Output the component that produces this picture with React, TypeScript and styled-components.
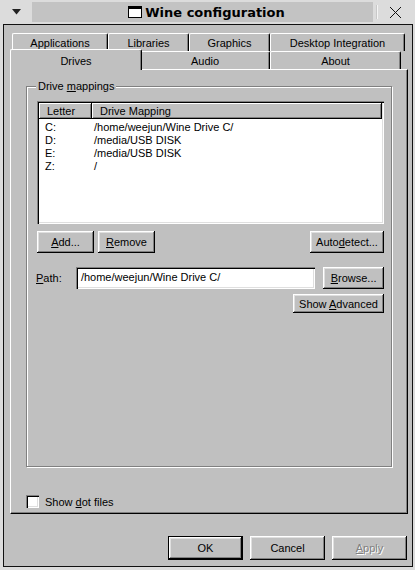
import React from 'react'
import styled, { createGlobalStyle } from 'styled-components'

const GlobalStyle = createGlobalStyle`
  html, body {
    margin: 0;
    padding: 0;
    background: #dcdcdc;
  }
  body {
    font-family: "Liberation Sans", Arial, sans-serif;
    font-size: 11px;
    color: #000;
  }
`

const Screen = styled.div`
  width: 415px;
  height: 570px;
  display: flex;
  flex-direction: column;
  background: #dcdcdc;
  overflow: hidden;
`

const TitleBar = styled.div`
  height: 24px;
  display: flex;
  align-items: stretch;
`

const MenuButton = styled.div`
  width: 32px;
  display: flex;
  align-items: center;
  justify-content: center;
`

const TitleArea = styled.div`
  flex: 1;
  margin: 2px 0;
  padding-left: 8px;
  background: #c3c3c3;
  display: flex;
  align-items: center;
  justify-content: center;
  gap: 3px;
  font-family: "DejaVu Sans", sans-serif;
  font-weight: bold;
  font-size: 13px;
  color: #000;
`

const CloseArea = styled.div`
  width: 38px;
  display: flex;
  align-items: center;
  gap: 11px;
  padding-left: 4px;
`

const Separator = styled.div`
  width: 1px;
  height: 14px;
  background: #f4f4f4;
  box-shadow: -1px 0 0 #c8c8c8;
`

const Window = styled.div`
  margin: 0 2px 0 3px;
  height: 543px;
  box-sizing: border-box;
  border: 1px solid #111;
  background: #c0c0c0;
  display: flex;
  flex-direction: column;
  padding: 8px 4px 0 6px;
`

const TabRow = styled.div<{ $front?: boolean }>`
  display: flex;
  height: 18px;
  margin-left: 2px;
  align-items: flex-end;
  position: relative;
  z-index: ${({ $front }) => ($front ? 2 : 1)};
`

const Tab = styled.div<{ $w: number; $selected?: boolean }>`
  width: ${({ $w }) => $w}px;
  height: ${({ $selected }) => ($selected ? 21 : 18)}px;
  margin: ${({ $selected }) => ($selected ? '0 -2px -1px -2px' : '0')};
  box-sizing: border-box;
  background: #c0c0c0;
  border-top: 1px solid #fff;
  border-left: 1px solid #fff;
  border-right: 1px solid #000;
  border-top-left-radius: 2px;
  border-top-right-radius: 2px;
  box-shadow: inset -1px 0 0 #808080;
  display: flex;
  justify-content: center;
  padding-top: ${({ $selected }) => ($selected ? 5 : 3)}px;
  line-height: 13px;
  position: relative;
  z-index: ${({ $selected }) => ($selected ? 3 : 1)};
`

const Panel = styled.div`
  height: 445px;
  box-sizing: border-box;
  background: #c0c0c0;
  border-top: 1px solid #fff;
  border-left: 1px solid #fff;
  border-right: 1px solid #000;
  border-bottom: 1px solid #000;
  box-shadow: inset -1px -1px 0 #808080;
  padding: 16px 15px 0 15px;
  display: flex;
  flex-direction: column;
`

const Group = styled.div`
  height: 381px;
  box-sizing: border-box;
  border: 1px solid #808080;
  box-shadow: 1px 1px 0 #fff, inset 1px 1px 0 #fff;
  display: flex;
  flex-direction: column;
  padding: 0 6px 0 10px;
`

const Legend = styled.span`
  align-self: flex-start;
  margin: -7px 0 0 -1px;
  padding: 0 2px;
  background: #c0c0c0;
  line-height: 13px;
`

const ListView = styled.div`
  margin-top: 8px;
  width: 347px;
  height: 123px;
  box-sizing: border-box;
  background: #fff;
  padding: 2px;
  box-shadow: inset 1px 1px 0 #808080, inset 2px 2px 0 #000, inset -1px -1px 0 #fff, inset -2px -2px 0 #dfdfdf;
  display: flex;
  flex-direction: column;
`

const HeaderRow = styled.div`
  display: grid;
  grid-template-columns: 53px 1fr;
  height: 16px;
`

const HeaderCell = styled.div`
  box-sizing: border-box;
  background: #c0c0c0;
  padding: 2px 0 0 8px;
  line-height: 12px;
  box-shadow: inset -1px -1px 0 #000, inset 1px 1px 0 #fff, inset -2px -2px 0 #808080;
`

const Rows = styled.div`
  padding-top: 2px;
`

const Row = styled.div`
  display: grid;
  grid-template-columns: 49px 1fr;
  height: 13px;
  line-height: 13px;
`

const Cell = styled.div`
  padding-left: 6px;
  white-space: nowrap;
`

const ButtonRow = styled.div<{ $top: number; $justify?: string }>`
  display: flex;
  align-items: center;
  gap: 4px;
  margin-top: ${({ $top }) => $top}px;
  width: 347px;
  justify-content: ${({ $justify }) => $justify ?? 'flex-start'};
`

const Spacer = styled.div`
  flex: 1;
`

const Button = styled.button<{ $w: number; $h?: number; $default?: boolean }>`
  width: ${({ $w }) => $w}px;
  height: ${({ $h }) => $h ?? 22}px;
  box-sizing: border-box;
  background: #c0c0c0;
  border: ${({ $default }) => ($default ? '1px solid #000' : 'none')};
  padding: 0;
  margin: 0;
  font-family: "Liberation Sans", Arial, sans-serif;
  font-size: 11px;
  color: #000;
  box-shadow: inset -1px -1px 0 #000, inset 1px 1px 0 #fff, inset -2px -2px 0 #808080, inset 2px 2px 0 #dfdfdf;
  &:disabled {
    color: #808080;
    text-shadow: 1px 1px 0 #fff;
  }
`

const U = styled.span`
  text-decoration: underline;
`

const PathLabel = styled.span`
  width: 36px;
  margin-left: -1px;
`

const PathInput = styled.div`
  width: 240px;
  height: 22px;
  box-sizing: border-box;
  background: #fff;
  padding: 4px 0 0 5px;
  line-height: 13px;
  white-space: nowrap;
  box-shadow: inset 1px 1px 0 #808080, inset 2px 2px 0 #000, inset -1px -1px 0 #fff, inset -2px -2px 0 #dfdfdf;
`

const CheckRow = styled.label`
  display: flex;
  align-items: center;
  gap: 6px;
  margin-top: 28px;
`

const CheckBox = styled.span`
  width: 13px;
  height: 13px;
  box-sizing: border-box;
  background: #fff;
  box-shadow: inset 1px 1px 0 #808080, inset 2px 2px 0 #000, inset -1px -1px 0 #fff, inset -2px -2px 0 #dfdfdf;
`

const Footer = styled.div`
  display: flex;
  justify-content: flex-end;
  gap: 7px;
  padding: 22px 1px 0 0;
`

const drives = [
  { letter: 'C:', path: '/home/weejun/Wine Drive C/' },
  { letter: 'D:', path: '/media/USB DISK' },
  { letter: 'E:', path: '/media/USB DISK' },
  { letter: 'Z:', path: '/' },
]

const App = () => {
  return (
    <Screen>
      <GlobalStyle />
      <TitleBar>
        <MenuButton>
          <svg width="9" height="6" viewBox="0 0 9 6">
            <path d="M0 0 H9 L4.5 5.5 Z" fill="#222" />
          </svg>
        </MenuButton>
        <TitleArea>
          <svg width="14" height="12" viewBox="0 0 14 12">
            <rect x="0.5" y="0.5" width="13" height="11" fill="#fff" stroke="#000" />
            <rect x="1" y="1" width="12" height="2" fill="#000" />
          </svg>
          <span>Wine configuration</span>
        </TitleArea>
        <CloseArea>
          <Separator />
          <svg width="13" height="13" viewBox="0 0 13 13">
            <path d="M1 1 L12 12 M12 1 L1 12" stroke="#111" strokeWidth="1" />
          </svg>
        </CloseArea>
      </TitleBar>
      <Window>
        <TabRow>
          <Tab $w={96}>Applications</Tab>
          <Tab $w={81}>Libraries</Tab>
          <Tab $w={81}>Graphics</Tab>
          <Tab $w={135}>Desktop Integration</Tab>
        </TabRow>
        <TabRow $front>
          <Tab $w={132} $selected>Drives</Tab>
          <Tab $w={130}>Audio</Tab>
          <Tab $w={131}>About</Tab>
        </TabRow>
        <Panel>
          <Group>
            <Legend>
              Drive <U>m</U>appings
            </Legend>
            <ListView>
              <HeaderRow>
                <HeaderCell>Letter</HeaderCell>
                <HeaderCell>Drive Mapping</HeaderCell>
              </HeaderRow>
              <Rows>
                {drives.map((d) => (
                  <Row key={d.letter}>
                    <Cell>{d.letter}</Cell>
                    <Cell>{d.path}</Cell>
                  </Row>
                ))}
              </Rows>
            </ListView>
            <ButtonRow $top={7}>
              <Button $w={57}>
                <U>A</U>dd...
              </Button>
              <Button $w={57}>
                <U>R</U>emove
              </Button>
              <Spacer />
              <Button $w={74}>
                Auto<U>d</U>etect...
              </Button>
            </ButtonRow>
            <ButtonRow $top={14}>
              <PathLabel>
                <U>P</U>ath:
              </PathLabel>
              <PathInput>/home/weejun/Wine Drive C/</PathInput>
              <Spacer />
              <Button $w={61}>
                <U>B</U>rowse...
              </Button>
            </ButtonRow>
            <ButtonRow $top={5} $justify="flex-end">
              <Button $w={91} $h={19}>
                Show <U>A</U>dvanced
              </Button>
            </ButtonRow>
          </Group>
          <CheckRow>
            <CheckBox />
            <span>
              Show <U>d</U>ot files
            </span>
          </CheckRow>
        </Panel>
        <Footer>
          <Button $w={75} $h={24} $default>
            OK
          </Button>
          <Button $w={75} $h={24}>
            Cancel
          </Button>
          <Button $w={75} $h={24} disabled>
            <U>A</U>pply
          </Button>
        </Footer>
      </Window>
    </Screen>
  )
}

export default App
